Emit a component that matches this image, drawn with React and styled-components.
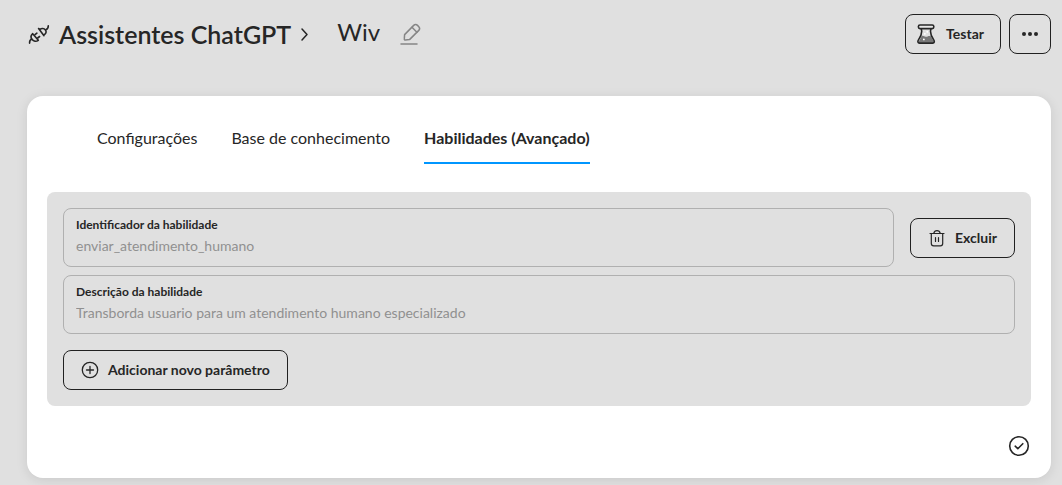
import styled, { createGlobalStyle } from "styled-components";

const GlobalStyle = createGlobalStyle`
  * {
    box-sizing: border-box;
  }
  body {
    margin: 0;
    background: #e0e0e0;
    color: #262626;
    font-family: Lato, "Open Sans", sans-serif;
  }
`;

const Page = styled.div`
  padding: 12px 11px 7px 27px;
`;

const Header = styled.header`
  display: flex;
  justify-content: space-between;
  align-items: center;
  height: 44px;
  margin-bottom: 40px;
`;

const Breadcrumb = styled.div`
  display: flex;
  align-items: center;
`;

const Title = styled.h1`
  margin: 0 6px 0 8px;
  font-size: 25px;
  line-height: 32px;
  font-weight: 600;
`;

const AssistantName = styled.span`
  margin: 0 20px 4px 22px;
  font-size: 24px;
  line-height: 32px;
`;

const IconButton = styled.button`
  display: flex;
  padding: 0;
  border: 0;
  background: none;
  color: ${(props) => props.$color || "#262626"};
  cursor: pointer;
`;

const Actions = styled.div`
  display: flex;
  gap: 8px;
`;

const Button = styled.button`
  display: flex;
  flex: none;
  align-items: center;
  justify-content: center;
  gap: 9px;
  height: 40px;
  padding: ${(props) => props.$padding || "0 17px"};
  border: 1px solid #212121;
  border-radius: 8px;
  background: none;
  color: #262626;
  font: inherit;
  font-size: 14px;
  line-height: 20px;
  font-weight: 700;
  cursor: pointer;
`;

const Card = styled.main`
  padding: 20px;
  border-radius: 16px;
  background: #fff;
  box-shadow: 0 2px 12px rgba(0, 0, 0, 0.1);
`;

const Tabs = styled.nav`
  display: flex;
  gap: 34px;
  margin: 0 50px 28px;
`;

const Tab = styled.a`
  padding: 12px 0 14px;
  border-bottom: 2px solid ${(props) => (props.$active ? "#0096ff" : "transparent")};
  color: #262626;
  font-size: 16px;
  line-height: 20px;
  font-weight: ${(props) => (props.$active ? 700 : 400)};
  text-decoration: none;
`;

const Panel = styled.section`
  display: flex;
  flex-direction: column;
  align-items: flex-start;
  gap: 8px;
  padding: 16px;
  border-radius: 8px;
  background: #e0e0e0;
`;

const Row = styled.div`
  display: flex;
  align-items: center;
  gap: 16px;
  width: 100%;
`;

const Field = styled.label`
  display: block;
  flex: 1;
  height: 59px;
  padding: 8px 12px;
  border: 1px solid #b0b0b0;
  border-radius: 8px;
`;

const Label = styled.span`
  display: block;
  font-size: 12px;
  line-height: 16px;
  font-weight: 700;
`;

const Input = styled.input`
  display: block;
  width: 100%;
  height: 24px;
  padding: 0;
  border: 0;
  outline: 0;
  background: none;
  color: #909090;
  font: inherit;
  font-size: 14px;
`;

const PanelFooter = styled.div`
  padding-top: 8px;
`;

const Footer = styled.footer`
  display: flex;
  justify-content: flex-end;
  padding: 29px 1px 1px;
`;

const stroke = {
  fill: "none",
  stroke: "currentColor",
  strokeLinecap: "round",
  strokeLinejoin: "round",
  "aria-hidden": true,
};

function PlugIcon() {
  return (
    <svg width="24" height="24" viewBox="0 0 24 24" strokeWidth="1.6" {...stroke}>
      <path d="M2.600 21.200c-.2-2 .4-3.300 2-4.200" />
      <path d="M5.700 11.700l5.600 6.600c-2.100 1.500-4.800 1.100-6.200-.7s-1.200-4.300.6-5.900z" />
      <path d="M8 12.700l1.900-1.500M10.700 16l1.900-1.500" />
      <path d="M11.600 6.500l5.400 7.200M12.600 7.700c2.100-1.800 4.400-1.600 5.800.2 1.400 2 .7 4-1.800 5.200" />
      <path d="M18.900 7.700c1.700-.8 2.500-2.100 2.400-4" />
    </svg>
  );
}

function ChevronIcon() {
  return (
    <svg width="18" height="18" viewBox="0 0 18 18" strokeWidth="1.5" {...stroke}>
      <path d="M5 4l5 5.500-5 5.500" />
    </svg>
  );
}

function PencilIcon() {
  return (
    <svg width="22" height="22" viewBox="0 0 22 22" strokeWidth="1.500" {...stroke}>
      <path d="M4.300 15.900l.3-4.300 9.100-9.200c1.100-1.100 2.700-1.100 3.800 0l1.300 1.300c1 1.100 1 2.600 0 3.700l-9.300 9.200-4.100.5c-.7.100-1.200-.5-1.100-1.200z" />
      <path d="M12 4.200l4.900 5" />
      <path d="M1 21h16" />
    </svg>
  );
}

function FlaskIcon() {
  return (
    <svg width="20" height="20" viewBox="0 0 20 20" strokeWidth="1.600" {...stroke}>
      <path d="M4.500 12.400c1.600-1.500 2.700.6 4.500.4 1.700-.2 2.600-1.500 4.700-.6l3.100 5.400c0 .8-.4 1.200-1 1.200H2.600c-.8 0-1.200-.5-.8-1.200z" fill="#777" stroke="none" />
      <path d="M4.200 4.700C5.300 7.700 5 10.800 1.600 15.600c-1.200 1.900-.8 3.500.9 3.500h13.200c1.700 0 2.100-1.600.9-3.500-3.400-4.800-3.700-7.900-2.600-10.900" />
      <rect x="1.400" y="1" width="15.400" height="3.600" rx="1.600" fill="#e8e8e8" />
      <path d="M7.800 9.800h.1M10.200 7.800h.1M6.800 15.400h.1" stroke="#fff" strokeWidth="1.800" />
    </svg>
  );
}

function DotsIcon() {
  return (
    <svg width="18" height="18" viewBox="0 0 18 18" fill="currentColor" aria-hidden="true">
      <circle cx="3" cy="9" r="2" />
      <circle cx="9" cy="9" r="2" />
      <circle cx="15" cy="9" r="2" />
    </svg>
  );
}

function TrashIcon() {
  return (
    <svg width="18" height="18" viewBox="0 0 18 18" strokeWidth="1.200" {...stroke}>
      <path d="M2 4.500h14M5.700 4.300c.5-1.700 1.500-2.700 3.300-2.700s2.800 1 3.300 2.700" />
      <path d="M3.300 4.500v10c0 1.600.8 2.400 2.400 2.400h6.600c1.600 0 2.400-.8 2.400-2.400v-10M7.500 8.500v4M10.500 8.500v4" />
    </svg>
  );
}

function PlusIcon() {
  return (
    <svg width="18" height="18" viewBox="0 0 18 18" strokeWidth="1.300" {...stroke}>
      <circle cx="9" cy="9" r="7.700" />
      <path d="M9 5.500v7M5.500 9h7" />
    </svg>
  );
}

function CheckIcon() {
  return (
    <svg width="22" height="22" viewBox="0 0 22 22" strokeWidth="1.600" {...stroke}>
      <circle cx="11" cy="11" r="9.300" />
      <path d="M7.200 11.200l2.600 2.500 5-5" />
    </svg>
  );
}

export default function App() {
  return (
    <>
      <GlobalStyle />
      <Page>
        <Header>
          <Breadcrumb>
            <PlugIcon />
            <Title>Assistentes ChatGPT</Title>
            <ChevronIcon />
            <AssistantName>Wiv</AssistantName>
            <IconButton $color="#858585" aria-label="Editar nome">
              <PencilIcon />
            </IconButton>
          </Breadcrumb>
          <Actions>
            <Button $padding="0 16px 0 11px">
              <FlaskIcon />
              Testar
            </Button>
            <Button $padding="0 11px" aria-label="Mais opções">
              <DotsIcon />
            </Button>
          </Actions>
        </Header>
        <Card>
          <Tabs>
            <Tab href="#configuracoes">Configurações</Tab>
            <Tab href="#base">Base de conhecimento</Tab>
            <Tab href="#habilidades" $active>
              Habilidades (Avançado)
            </Tab>
          </Tabs>
          <Panel>
            <Row>
              <Field>
                <Label>Identificador da habilidade</Label>
                <Input defaultValue="enviar_atendimento_humano" />
              </Field>
              <Button>
                <TrashIcon />
                Excluir
              </Button>
            </Row>
            <Row>
              <Field>
                <Label>Descrição da habilidade</Label>
                <Input defaultValue="Transborda usuario para um atendimento humano especializado" />
              </Field>
            </Row>
            <PanelFooter>
              <Button>
                <PlusIcon />
                Adicionar novo parâmetro
              </Button>
            </PanelFooter>
          </Panel>
          <Footer>
            <IconButton aria-label="Salvar">
              <CheckIcon />
            </IconButton>
          </Footer>
        </Card>
      </Page>
    </>
  );
}
